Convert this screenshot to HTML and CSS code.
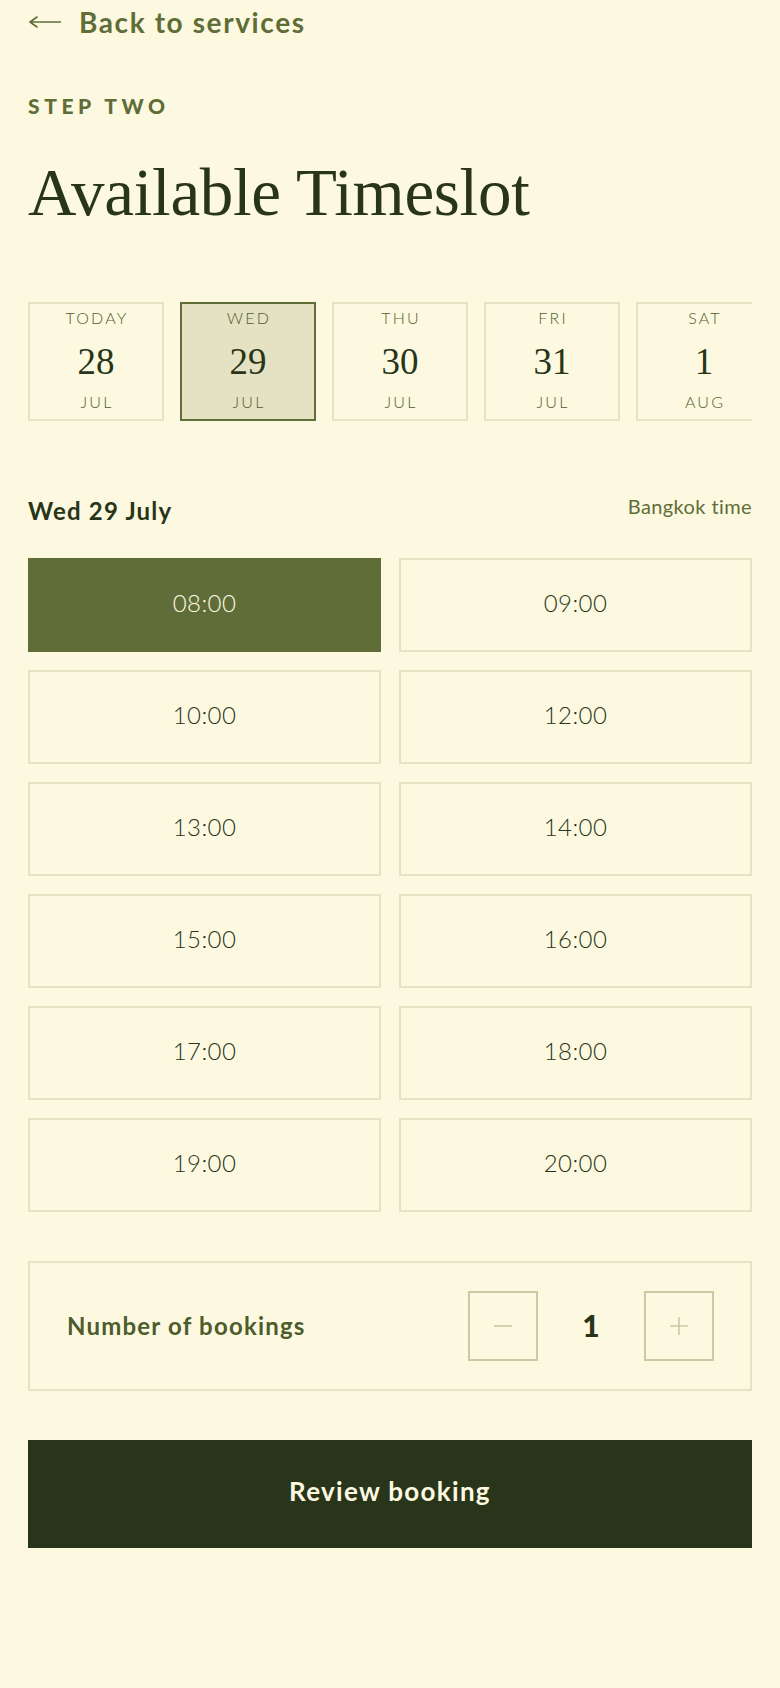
FILE: index.html
```html
<!DOCTYPE html>
<html lang="en">
<head>
<meta charset="utf-8">
<title>Available Timeslot</title>
<link rel="stylesheet" href="styles.css">
</head>
<body>
<main class="page">
  <a class="back" href="#">
    <svg class="back-arrow" width="32" height="12" viewBox="0 0 32 12" aria-hidden="true"><path d="M1 6 H32 M8 1 L1 6 L8 11" fill="none" stroke="currentColor" stroke-width="1.6" stroke-linecap="round" stroke-linejoin="round"/></svg>
    <span>Back to services</span>
  </a>

  <p class="step">STEP TWO</p>
  <h1 class="title">Available Timeslot</h1>

  <div class="dates">
    <div class="date"><span class="date-day">TODAY</span><span class="date-num">28</span><span class="date-mon">JUL</span></div>
    <div class="date is-active"><span class="date-day">WED</span><span class="date-num">29</span><span class="date-mon">JUL</span></div>
    <div class="date"><span class="date-day">THU</span><span class="date-num">30</span><span class="date-mon">JUL</span></div>
    <div class="date"><span class="date-day">FRI</span><span class="date-num">31</span><span class="date-mon">JUL</span></div>
    <div class="date"><span class="date-day">SAT</span><span class="date-num">1</span><span class="date-mon">AUG</span></div>
  </div>

  <div class="day-row">
    <h2 class="day-title">Wed 29 July</h2>
    <span class="tz">Bangkok time</span>
  </div>

  <div class="slots">
    <button class="slot is-active">08:00</button>
    <button class="slot">09:00</button>
    <button class="slot">10:00</button>
    <button class="slot">12:00</button>
    <button class="slot">13:00</button>
    <button class="slot">14:00</button>
    <button class="slot">15:00</button>
    <button class="slot">16:00</button>
    <button class="slot">17:00</button>
    <button class="slot">18:00</button>
    <button class="slot">19:00</button>
    <button class="slot">20:00</button>
  </div>

  <div class="bookings">
    <span class="bookings-label">Number of bookings</span>
    <div class="stepper">
      <button class="step-btn" aria-label="Decrease"><svg width="18" height="18" viewBox="0 0 18 18" aria-hidden="true"><path d="M0 9 H18" stroke="currentColor" stroke-width="1.6"/></svg></button>
      <span class="step-value">1</span>
      <button class="step-btn" aria-label="Increase"><svg width="18" height="18" viewBox="0 0 18 18" aria-hidden="true"><path d="M0 9 H18 M9 0 V18" stroke="currentColor" stroke-width="1.6"/></svg></button>
    </div>
  </div>

  <button class="review">Review booking</button>
</main>
</body>
</html>
```
FILE: styles.css
```css
* { box-sizing: border-box; }

html, body {
  margin: 0;
  background: #fdf9e1;
}

body {
  font-family: Lato, "Open Sans", "Liberation Sans", sans-serif;
  color: #283518;
}

.page {
  padding: 5px 28px 60px;
}

.back {
  display: flex;
  align-items: center;
  height: 34px;
  color: #5f6d37;
  text-decoration: none;
  font-size: 28px;
  font-weight: 700;
  line-height: 34px;
  letter-spacing: 1.6px;
}

.back-arrow {
  margin: 0 18px 0 1px;
}

.step {
  margin: 54px 0 0;
  font-size: 21px;
  line-height: 26px;
  font-weight: 900;
  letter-spacing: 4.6px;
  color: #5f6d37;
}

.title {
  margin: 36px 0 0;
  font-family: "Liberation Serif", "Times New Roman", serif;
  font-weight: 400;
  font-size: 67px;
  line-height: 74px;
  letter-spacing: -0.3px;
  color: #283518;
}

.dates {
  margin-top: 73px;
  display: flex;
  gap: 16px;
  overflow: hidden;
}

.date {
  flex: 0 0 136px;
  height: 119px;
  border: 2px solid #e6e3c4;
  display: flex;
  flex-direction: column;
  align-items: center;
  padding-top: 6px;
}

.date.is-active {
  background: #e5e2c3;
  border-color: #5f6d37;
}

.date-day,
.date-mon {
  font-size: 16px;
  line-height: 16px;
  font-weight: 300;
  letter-spacing: 2.2px;
  color: #4f5e2e;
  margin-right: -2px;
}

.date-num {
  margin-top: 17px;
  font-family: "Liberation Serif", "Times New Roman", serif;
  font-size: 37px;
  line-height: 37px;
  color: #283518;
}

.date-mon {
  margin-top: 14px;
}

.day-row {
  margin-top: 75px;
  display: flex;
  justify-content: space-between;
  align-items: flex-start;
}

.day-title {
  margin: 0;
  font-size: 24px;
  line-height: 30px;
  font-weight: 700;
  letter-spacing: 1.2px;
  color: #283518;
}

.tz {
  font-size: 20px;
  line-height: 20px;
  font-weight: 400;
  letter-spacing: 0.4px;
  color: #5f6d37;
}

.slots {
  margin-top: 32px;
  display: grid;
  grid-template-columns: 1fr 1fr;
  gap: 18px;
}

.slot {
  height: 94px;
  border: 2px solid #e6e3c4;
  background: transparent;
  font-family: inherit;
  font-size: 24px;
  font-weight: 300;
  letter-spacing: 0.4px;
  color: #283518;
  padding: 0 0 5px;
}

.slot.is-active {
  background: #606d39;
  border-color: #606d39;
  color: #fdf9e1;
}

.bookings {
  margin-top: 49px;
  height: 130px;
  border: 2px solid #e6e3c4;
  padding: 0 36px 0 37px;
  display: flex;
  align-items: center;
  justify-content: space-between;
}

.bookings-label {
  font-size: 24px;
  font-weight: 700;
  letter-spacing: 1.2px;
  color: #4e5c2c;
  padding-bottom: 2px;
}

.stepper {
  display: flex;
  align-items: center;
}

.step-btn {
  width: 70px;
  height: 70px;
  border: 2px solid #c9caa2;
  background: transparent;
  color: #c9caa2;
  display: flex;
  align-items: center;
  justify-content: center;
  padding: 0;
}

.step-value {
  width: 106px;
  text-align: center;
  font-size: 30px;
  font-weight: 900;
  color: #283518;
  padding-bottom: 2px;
}

.review {
  margin-top: 49px;
  width: 100%;
  height: 108px;
  border: 0;
  background: #29351a;
  color: #fdf9e1;
  font-family: inherit;
  font-size: 26px;
  font-weight: 700;
  letter-spacing: 1.3px;
  padding: 0 0 6px;
}
```
